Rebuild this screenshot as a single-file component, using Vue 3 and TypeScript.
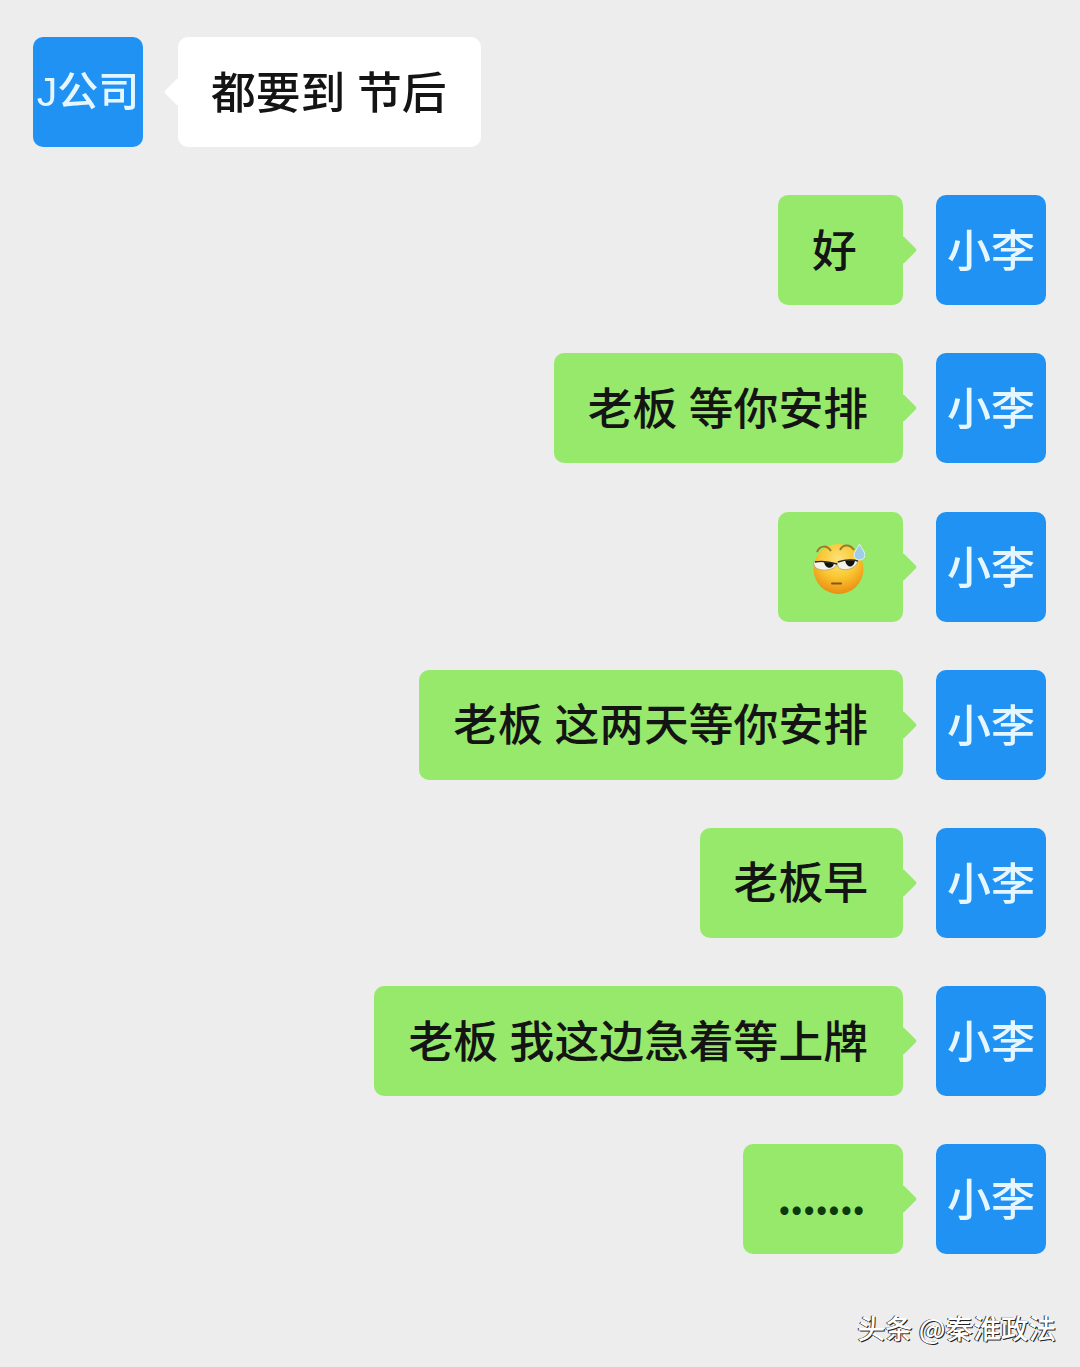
<script setup lang="ts">
interface Message {
  id: number
  text: string
  emoji?: boolean
  dots?: boolean
}

const messages: Message[] = [
  { id: 1, text: '好' },
  { id: 2, text: '老板 等你安排' },
  { id: 3, text: '', emoji: true },
  { id: 4, text: '老板 这两天等你安排' },
  { id: 5, text: '老板早' },
  { id: 6, text: '老板 我这边急着等上牌' },
  { id: 7, text: '.......', dots: true },
]
</script>

<template>
  <div class="page">
    <div class="chat">
      <div class="row incoming-row">
        <div class="avatar avatar-small">J公司</div>
        <div class="bubble incoming">都要到 节后</div>
      </div>
      <div v-for="msg in messages" :key="msg.id" class="row outgoing-row">
        <div class="bubble outgoing" :class="{ dots: msg.dots, 'emoji-bubble': msg.emoji }">
          <svg v-if="msg.emoji" class="emoji" viewBox="0 0 52 52" width="52" height="52" aria-label="汗">
            <defs>
              <radialGradient id="face" cx="50%" cy="30%" r="72%">
                <stop offset="0%" stop-color="#fbe27a" />
                <stop offset="50%" stop-color="#fac832" />
                <stop offset="100%" stop-color="#ea8a10" />
              </radialGradient>
            </defs>
            <circle cx="25.5" cy="27" r="25" fill="url(#face)" />
            <path d="M4 10 C7 3 14 3 18 9" fill="none" stroke="#9c7a2a" stroke-width="2" />
            <path d="M27 8 C30 2 37 2 41 8" fill="none" stroke="#9c7a2a" stroke-width="2" />
            <path d="M0 20 C8 19 16 20 24 22 C22 29 6 30 2 25 Z" fill="#f4f3ea" stroke="#a59a6e" stroke-width="0.7" />
            <path d="M24 20 C31 18 38 17 45 19 C43 28 29 30 25 25 Z" fill="#f4f3ea" stroke="#a59a6e" stroke-width="0.7" />
            <path d="M11 20 C14 20 18 21 21 21.5 C20 27 13 28 11 20 Z" fill="#15120e" />
            <path d="M32 18.5 C35 18 39 18 42 18.5 C41 26 34 27 32 18.5 Z" fill="#15120e" />
            <path d="M2 20 C9 18.5 16 19.5 24 22" fill="none" stroke="#2a2620" stroke-width="1.4" />
            <path d="M25 20 C31 18 38 17 45 19" fill="none" stroke="#2a2620" stroke-width="1.4" />
            <path d="M19 41.5 H28" stroke="#8a5514" stroke-width="2" stroke-linecap="round" />
            <path d="M46.5 2 C49 7 52 10 52 13 C52 16 49.5 18 46.5 18 C43.5 18 41 16 41 13 C41 10 44 7 46.5 2 Z" fill="#9fcde8" stroke="#e4f2fa" stroke-width="1" />
          </svg>
          <template v-else>{{ msg.text }}</template>
        </div>
        <div class="avatar">小李</div>
      </div>
    </div>
    <div class="watermark">头条 @秦淮政法</div>
  </div>
</template>

<style scoped>
.page {
  position: relative;
  width: 1080px;
  height: 1367px;
  overflow: hidden;
  background: #ededed;
  font-family: "Noto Sans CJK SC", "Noto Sans", sans-serif;
}

.chat {
  display: flex;
  flex-direction: column;
  gap: 48.2px;
  padding: 37px 34px 0 33px;
  filter: blur(0.6px);
}

.row {
  display: flex;
  align-items: stretch;
  height: 110px;
}

.incoming-row {
  gap: 35px;
}

.outgoing-row {
  justify-content: flex-end;
  gap: 33px;
}

.avatar {
  flex: none;
  width: 110px;
  height: 110px;
  box-sizing: border-box;
  padding-bottom: 4px;
  display: flex;
  align-items: center;
  justify-content: center;
  border-radius: 10px;
  background: #2092f3;
  color: #e6f6ff;
  font-size: 44px;
  font-weight: 500;
  white-space: nowrap;
}

.avatar-small {
  padding-bottom: 8px;
  font-size: 41px;
  font-family: "Liberation Sans", "Noto Sans CJK SC", sans-serif;
}

.bubble {
  position: relative;
  display: flex;
  align-items: center;
  min-width: 125px;
  box-sizing: border-box;
  padding: 0 35px 6px 34px;
  border-radius: 10px;
  color: #141414;
  font-size: 44.8px;
  font-weight: 500;
  word-spacing: 1.5px;
  white-space: pre;
}

.bubble::after {
  content: "";
  position: absolute;
  top: 50%;
  width: 20px;
  height: 20px;
  margin-top: -10px;
  background: inherit;
  transform: rotate(45deg);
  border-radius: 2px;
}

.incoming {
  padding-left: 33px;
  padding-right: 34px;
  background: #fff;
}

.incoming::after {
  left: -10px;
}

.outgoing {
  background: #97e96b;
}

.outgoing::after {
  right: -10px;
}

.dots {
  padding: 0 39px 8px 34px;
  font-size: 44px;
  font-weight: 700;
  letter-spacing: -1.9px;
  color: #0c3a0c;
}

.emoji-bubble {
  padding: 2px 35px 0 35px;
}

.emoji {
  display: block;
}

.watermark {
  position: absolute;
  right: 24px;
  top: 1307px;
  color: #fff;
  font-size: 27.6px;
  font-weight: 500;
  line-height: 40px;
  white-space: pre;
  text-shadow: 1px 1px 0 #222, -1px 0 0 #333;
}
</style>
